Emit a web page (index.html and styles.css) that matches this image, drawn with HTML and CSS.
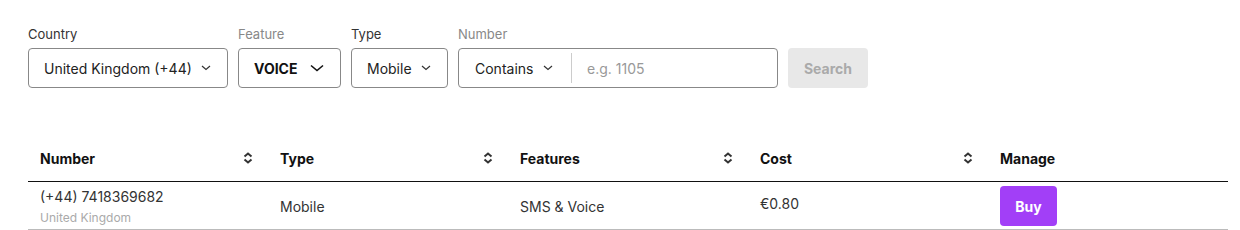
FILE: index.html
```html
<!DOCTYPE html>
<html>
<head>
<meta charset="utf-8">
<link rel="stylesheet" href="styles.css">
</head>
<body>
<div class="page">
  <div class="filters">
    <div class="field">
      <div class="label">Country</div>
      <div class="select w-country"><span>United Kingdom (+44)</span><svg class="chev" width="10" height="6" viewBox="0 0 10 6"><path d="M1 1l4 3.5L9 1" fill="none" stroke="#333" stroke-width="1.2"/></svg></div>
    </div>
    <div class="field">
      <div class="label muted">Feature</div>
      <div class="select w-feature"><span class="bold">VOICE</span><svg class="chev" width="14" height="8" viewBox="0 0 14 8"><path d="M1 1.5l6 5 6-5" fill="none" stroke="#111" stroke-width="1.6"/></svg></div>
    </div>
    <div class="field">
      <div class="label">Type</div>
      <div class="select w-type"><span>Mobile</span><svg class="chev" width="10" height="6" viewBox="0 0 10 6"><path d="M1 1l4 3.5L9 1" fill="none" stroke="#333" stroke-width="1.2"/></svg></div>
    </div>
    <div class="field">
      <div class="label muted">Number</div>
      <div class="numgroup">
        <div class="contains"><span>Contains</span><svg class="chev" width="10" height="6" viewBox="0 0 10 6"><path d="M1 1l4 3.5L9 1" fill="none" stroke="#333" stroke-width="1.2"/></svg></div>
        <div class="placeholder">e.g. 1105</div>
      </div>
    </div>
    <div class="field">
      <div class="label">&nbsp;</div>
      <button class="search">Search</button>
    </div>
  </div>

  <div class="table">
    <div class="thead">
      <div class="th"><span>Number</span><svg class="sort" width="10" height="12" viewBox="0 0 10 12"><path d="M1.5 4.5L5 1.5l3.5 3M1.5 7.5L5 10.5l3.5-3" fill="none" stroke="#333" stroke-width="2"/></svg></div>
      <div class="th"><span>Type</span><svg class="sort" width="10" height="12" viewBox="0 0 10 12"><path d="M1.5 4.5L5 1.5l3.5 3M1.5 7.5L5 10.5l3.5-3" fill="none" stroke="#333" stroke-width="2"/></svg></div>
      <div class="th"><span>Features</span><svg class="sort" width="10" height="12" viewBox="0 0 10 12"><path d="M1.5 4.5L5 1.5l3.5 3M1.5 7.5L5 10.5l3.5-3" fill="none" stroke="#333" stroke-width="2"/></svg></div>
      <div class="th"><span>Cost</span><svg class="sort" width="10" height="12" viewBox="0 0 10 12"><path d="M1.5 4.5L5 1.5l3.5 3M1.5 7.5L5 10.5l3.5-3" fill="none" stroke="#333" stroke-width="2"/></svg></div>
      <div class="th"><span>Manage</span></div>
    </div>
    <div class="row">
      <div class="td numcell">
        <div class="num">(+44) 7418369682</div>
        <div class="sub">United Kingdom</div>
      </div>
      <div class="td mid">Mobile</div>
      <div class="td mid">SMS &amp; Voice</div>
      <div class="td cost">€0.80</div>
      <div class="td mid"><button class="buy">Buy</button></div>
    </div>
  </div>
</div>
</body>
</html>
```
FILE: styles.css
```css
* { box-sizing: border-box; }
body {
  margin: 0;
  background: #fff;
  font-family: Inter, "Open Sans", "Liberation Sans", sans-serif;
  color: #222;
}
.page { padding: 26px 12px 0 28px; }
.filters { display: flex; gap: 10px; }
.field { display: flex; flex-direction: column; }
.label {
  font-size: 13px;
  line-height: 16px;
  height: 22px;
  color: #333;
}
.label.muted { color: #888; }
.select {
  height: 40px;
  border: 1px solid #888;
  border-radius: 4px;
  display: flex;
  align-items: center;
  justify-content: space-between;
  font-size: 14px;
  color: #222;
}
.w-country { width: 200px; padding: 0 16px 0 15px; }
.w-feature { width: 103px; padding: 0 16px 0 15px; }
.w-type { width: 97px; padding: 0 16px 0 15px; }
.bold { font-weight: 700; color: #111; }
.numgroup {
  width: 320px;
  height: 40px;
  border: 1px solid #888;
  border-radius: 4px;
  display: flex;
  align-items: center;
  font-size: 14px;
}
.contains {
  width: 113px;
  height: 30px;
  display: flex;
  align-items: center;
  justify-content: space-between;
  padding: 0 18px 0 16px;
  border-right: 1px solid #ccc;
}
.placeholder { padding-left: 15px; color: #999; }
.search {
  width: 80px;
  height: 40px;
  border: none;
  border-radius: 4px;
  background: #e8e8e8;
  color: #aaa;
  font-family: inherit;
  font-weight: 700;
  font-size: 14px;
}
.table { margin-top: 52px; width: 1200px; }
.thead {
  display: grid;
  grid-template-columns: repeat(5, 240px);
  height: 42px;
  padding-bottom: 4px;
  border-bottom: 1px solid #111;
}
.th {
  display: flex;
  align-items: center;
  justify-content: space-between;
  padding: 0 15px 0 12px;
  font-size: 14px;
  font-weight: 700;
  color: #111;
}
.sort { margin-top: -1px; }
.row {
  display: grid;
  grid-template-columns: repeat(5, 240px);
  height: 48px;
  border-bottom: 1px solid #bbb;
}
.td { padding: 0 12px; font-size: 14px; color: #333; }
.mid { display: flex; align-items: center; padding-top: 1px; }
.cost { padding-top: 13px; }
.numcell { padding-top: 6px; }
.num { font-size: 14px; line-height: 18px; }
.sub { font-size: 12px; line-height: 14px; color: #aaa; margin-top: 5px; }
.buy {
  width: 57px;
  height: 40px;
  border: none;
  border-radius: 4px;
  background: #a23ff7;
  color: #fff;
  font-family: inherit;
  font-weight: 700;
  font-size: 14px;
}
```
